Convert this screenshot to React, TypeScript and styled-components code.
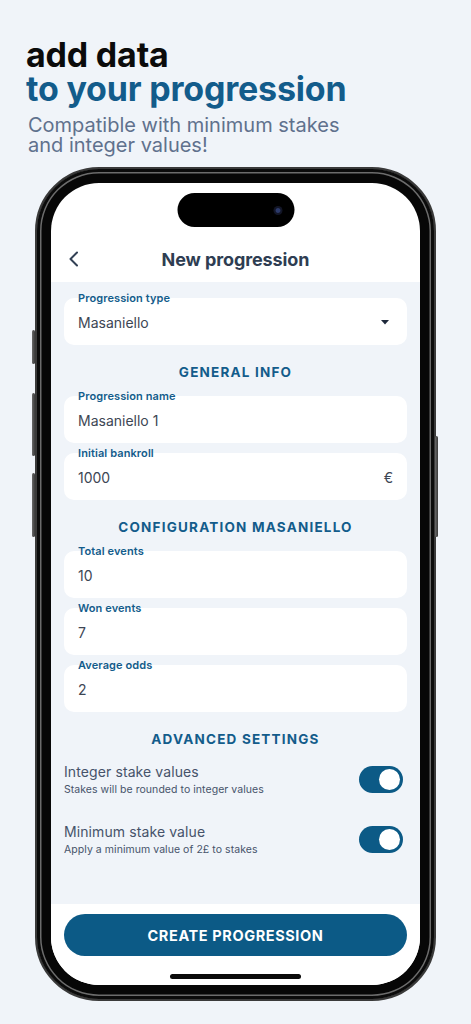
import styled, { createGlobalStyle } from "styled-components";

const GlobalStyle = createGlobalStyle`
  html, body {
    margin: 0;
    padding: 0;
    background: #f0f4f9;
  }
  * {
    box-sizing: border-box;
  }
`;

const BLUE = "#0c5a86";

const Page = styled.div`
  width: 471px;
  height: 1024px;
  overflow: hidden;
  background: #f0f4f9;
  font-family: Inter, "Noto Sans", sans-serif;
`;

const Hero = styled.div`
  padding: 38px 0 0 26px;
  height: 167px;
`;

const Title = styled.h1<{ $blue?: boolean }>`
  margin: 0;
  font-size: 34px;
  font-weight: 700;
  line-height: 34px;
  letter-spacing: -0.2px;
  color: ${(p) => (p.$blue ? "#135c8b" : "#0b0b0b")};
`;

const Subtitle = styled.p`
  margin: 9px 0 0 2px;
  font-size: 20px;
  line-height: 20px;
  color: #60718d;
`;

const Phone = styled.div`
  position: relative;
  margin: 0 auto;
  width: 401px;
  height: 834px;
  border-radius: 64px;
  border: 2px solid #3a3a3a;
  background: #070707;
  padding: 14px;
  box-shadow: inset 0 0 0 3px #0b0b0b, inset 0 0 0 4.5px #6c6c6c;
`;

const SideButton = styled.div<{ $right?: boolean }>`
  position: absolute;
  width: 3px;
  border-radius: 2px;
  background: linear-gradient(90deg, #6a6a6a, #3a3a3a);
  ${(p) => (p.$right ? "right: -4px;" : "left: -5px;")}
`;

const Screen = styled.div`
  position: relative;
  height: 100%;
  border-radius: 48px;
  background: #ffffff;
  overflow: hidden;
  display: flex;
  flex-direction: column;
`;

const Island = styled.div`
  position: absolute;
  top: 10px;
  left: 50%;
  transform: translateX(-50%);
  width: 117px;
  height: 34px;
  border-radius: 17px;
  background: #000;
  display: flex;
  align-items: center;
  justify-content: flex-end;
  padding-right: 12px;
`;

const Camera = styled.div`
  width: 9px;
  height: 9px;
  border-radius: 50%;
  background: radial-gradient(circle, #2c3a6a 0 30%, #121526 45%);
`;

const Header = styled.div`
  height: 99px;
  padding: 56px 0 0;
  flex-shrink: 0;
`;

const HeaderRow = styled.div`
  position: relative;
  height: 40px;
  display: flex;
  align-items: center;
  justify-content: center;
`;

const BackButton = styled.div`
  position: absolute;
  left: 17px;
  top: 12px;
  display: flex;
`;

const HeaderTitle = styled.div`
  font-size: 18px;
  font-weight: 700;
  color: #2e3d52;
  letter-spacing: -0.1px;
`;

const Form = styled.div`
  flex: 1;
  background: #f0f4f9;
  padding: 16px 13px 0;
  display: flex;
  flex-direction: column;
`;

const FieldGroup = styled.div`
  display: flex;
  flex-direction: column;
  gap: 10px;
`;

const Field = styled.div`
  position: relative;
  height: 47px;
  border-radius: 10px;
  background: #ffffff;
  display: flex;
  align-items: center;
  justify-content: space-between;
  padding: 1px 18px 0 14px;
`;

const FieldLabel = styled.span`
  position: absolute;
  top: -6px;
  left: 14px;
  font-size: 11px;
  font-weight: 600;
  line-height: 12px;
  color: #135c8b;
  letter-spacing: 0.1px;
`;

const FieldValue = styled.span`
  font-size: 14px;
  color: #3d4654;
`;

const Suffix = styled.span`
  font-size: 14px;
  color: #3d4654;
  margin-right: -4px;
`;

const SectionTitle = styled.div`
  margin: 17px 0 14px;
  height: 20px;
  line-height: 20px;
  text-align: center;
  font-size: 13.5px;
  font-weight: 700;
  letter-spacing: 1.2px;
  color: #135c8b;
`;

const Settings = styled.div`
  margin-top: -4px;
  display: flex;
  flex-direction: column;
  gap: 20px;
`;

const SettingRow = styled.div`
  height: 40px;
  display: flex;
  align-items: center;
  justify-content: space-between;
`;

const SettingText = styled.div`
  display: flex;
  flex-direction: column;
  gap: 2px;
`;

const SettingLabel = styled.span`
  font-size: 14px;
  line-height: 19px;
  color: #46536a;
  letter-spacing: 0.1px;
`;

const SettingHint = styled.span`
  font-size: 10.5px;
  line-height: 14px;
  color: #46536a;
  letter-spacing: 0.05px;
`;

const Toggle = styled.div<{ $on: boolean }>`
  width: 44px;
  height: 27px;
  margin-right: 4px;
  border-radius: 14px;
  background: ${(p) => (p.$on ? BLUE : "#cbd5e1")};
  display: flex;
  align-items: center;
  justify-content: ${(p) => (p.$on ? "flex-end" : "flex-start")};
  padding: 0 3px;
`;

const Knob = styled.div`
  width: 21px;
  height: 21px;
  border-radius: 50%;
  background: #ffffff;
`;

const Footer = styled.div`
  height: 81px;
  flex-shrink: 0;
  background: #ffffff;
  padding: 10px 13px 0;
  display: flex;
  flex-direction: column;
  align-items: center;
`;

const PrimaryButton = styled.button`
  width: 100%;
  height: 42px;
  border: none;
  border-radius: 21px;
  background: ${BLUE};
  color: #ffffff;
  font-family: Inter, "Noto Sans", sans-serif;
  font-size: 14.5px;
  font-weight: 700;
  letter-spacing: 0.6px;
`;

const HomeIndicator = styled.div`
  margin-top: 18px;
  width: 131px;
  height: 5px;
  border-radius: 3px;
  background: #0a0a0a;
`;

type FieldProps = { label: string; value: string; suffix?: React.ReactNode };

const InputField = ({ label, value, suffix }: FieldProps) => (
  <Field>
    <FieldLabel>{label}</FieldLabel>
    <FieldValue>{value}</FieldValue>
    {suffix}
  </Field>
);

const settings = [
  { label: "Integer stake values", hint: "Stakes will be rounded to integer values" },
  { label: "Minimum stake value", hint: "Apply a minimum value of 2£ to stakes" },
];

export default function App() {
  return (
    <Page>
      <GlobalStyle />
      <Hero>
        <Title>add data</Title>
        <Title $blue>to your progression</Title>
        <Subtitle>
          Compatible with minimum stakes
          <br />
          and integer values!
        </Subtitle>
      </Hero>

      <Phone>
        <SideButton style={{ top: 161, height: 34 }} />
        <SideButton style={{ top: 224, height: 63 }} />
        <SideButton style={{ top: 304, height: 64 }} />
        <SideButton $right style={{ top: 267, height: 101 }} />

        <Screen>
          <Island>
            <Camera />
          </Island>

          <Header>
            <HeaderRow>
              <BackButton>
                <svg width="12" height="16" viewBox="0 0 12 16">
                  <polyline
                    points="9,1.5 2.5,8 9,14.5"
                    fill="none"
                    stroke="#334155"
                    strokeWidth="2"
                    strokeLinecap="round"
                    strokeLinejoin="round"
                  />
                </svg>
              </BackButton>
              <HeaderTitle>New progression</HeaderTitle>
            </HeaderRow>
          </Header>

          <Form>
            <InputField
              label="Progression type"
              value="Masaniello"
              suffix={
                <svg width="8" height="5" viewBox="0 0 8 5">
                  <polygon points="0,0 8,0 4,4.5" fill="#1e293b" />
                </svg>
              }
            />

            <SectionTitle>GENERAL INFO</SectionTitle>
            <FieldGroup>
              <InputField label="Progression name" value="Masaniello 1" />
              <InputField label="Initial bankroll" value="1000" suffix={<Suffix>€</Suffix>} />
            </FieldGroup>

            <SectionTitle>CONFIGURATION MASANIELLO</SectionTitle>
            <FieldGroup>
              <InputField label="Total events" value="10" />
              <InputField label="Won events" value="7" />
              <InputField label="Average odds" value="2" />
            </FieldGroup>

            <SectionTitle>ADVANCED SETTINGS</SectionTitle>
            <Settings>
              {settings.map((s) => (
                <SettingRow key={s.label}>
                  <SettingText>
                    <SettingLabel>{s.label}</SettingLabel>
                    <SettingHint>{s.hint}</SettingHint>
                  </SettingText>
                  <Toggle $on>
                    <Knob />
                  </Toggle>
                </SettingRow>
              ))}
            </Settings>
          </Form>

          <Footer>
            <PrimaryButton>CREATE PROGRESSION</PrimaryButton>
            <HomeIndicator />
          </Footer>
        </Screen>
      </Phone>
    </Page>
  );
}
